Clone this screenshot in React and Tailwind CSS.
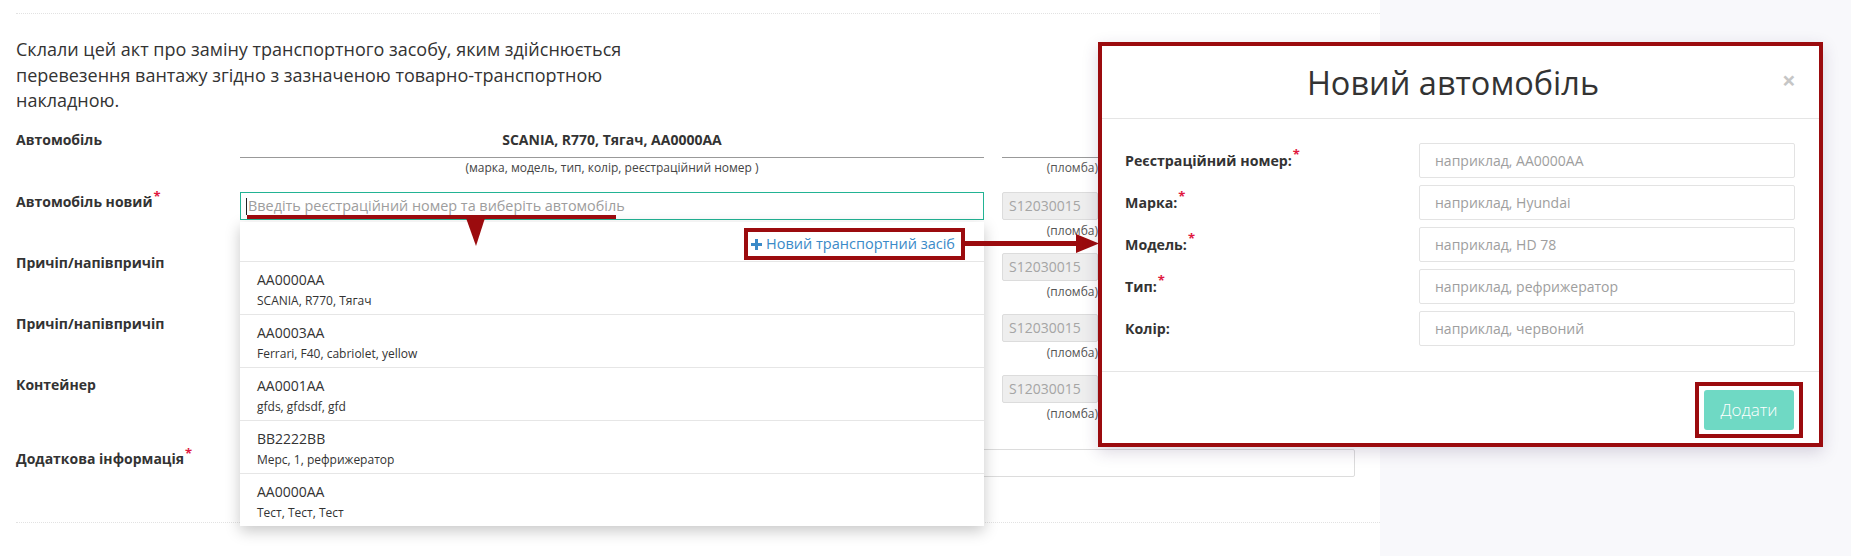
import React from "react";

// items shown in the autocomplete list
const cars = [
  { num: "AA0000AA", desc: "SCANIA, R770, Тягач" },
  { num: "AA0003AA", desc: "Ferrari, F40, cabriolet, yellow" },
  { num: "AA0001AA", desc: "gfds, gfdsdf, gfd" },
  { num: "BB2222BB", desc: "Мерс, 1, рефрижератор" },
  { num: "AA0000AA", desc: "Тест, Тест, Тест" },
];

// fields of the "new car" dialog
const fields = [
  { label: "Реєстраційний номер:", req: true, ph: "наприклад, AA0000AA" },
  { label: "Марка:", req: true, ph: "наприклад, Hyundai" },
  { label: "Модель:", req: true, ph: "наприклад, HD 78" },
  { label: "Тип:", req: true, ph: "наприклад, рефрижератор" },
  { label: "Колір:", req: false, ph: "наприклад, червоний" },
];

const Star = () => <sup className="text-[#e0193f] text-[13px] ml-[1px]">*</sup>;

const Seal = ({ value }) => (
  <div className="w-[96px] shrink-0 ml-[18px]">
    <div className="h-[28px] border border-[#dcdcdc] bg-[#eeeeee] rounded-[2px] pl-[6px] text-[14px] leading-[26px] text-[#a5a5a5] whitespace-nowrap overflow-hidden">
      {value}
    </div>
    <div className="mt-[3px] text-right text-[12px] leading-[16px] text-[#555]">(пломба)</div>
  </div>
);

const Row = ({ label, req, children }) => (
  <div className="flex h-[61px]">
    <div className="w-[224px] shrink-0 text-[14px] font-bold leading-[20px] text-[#333]">
      {label}
      {req && <Star />}
    </div>
    <div className="w-[744px] shrink-0">{children}</div>
    <Seal value="S12030015" />
  </div>
);

const App = () => {
  return (
    <div className="relative flex w-[1851px] h-[556px] overflow-hidden bg-white font-['Open_Sans',sans-serif] text-[#333]">
      {/* main form column */}
      <div className="w-[1380px] shrink-0 bg-white pl-[16px] flex flex-col">
        <div className="mt-[13px] border-t border-dotted border-[#e2e2e2]" />
        <p className="mt-[23px] text-[18px] leading-[25.7px] whitespace-nowrap">
          Склали цей акт про заміну транспортного засобу, яким здійснюється
          <br />
          перевезення вантажу згідно з зазначеною товарно-транспортною
          <br />
          накладною.
        </p>

        {/* current car */}
        <div className="mt-[16px] flex">
          <div className="w-[224px] shrink-0 text-[14px] font-bold leading-[20px]">Автомобіль</div>
          <div className="w-[744px] shrink-0">
            <div className="h-[28px] border-b border-[#999] text-center text-[14px] font-bold leading-[20px]">
              SCANIA, R770, Тягач, AA0000AA
            </div>
            <div className="mt-[2px] text-center text-[12px] leading-[16px] text-[#444]">
              (марка, модель, тип, колір, реєстраційний номер )
            </div>
          </div>
          <div className="w-[96px] shrink-0 ml-[18px]">
            <div className="h-[28px] border-b border-[#999]" />
            <div className="mt-[2px] text-right text-[12px] leading-[16px] text-[#555]">(пломба)</div>
          </div>
        </div>

        <div className="mt-[16px]">
          <Row label="Автомобіль новий" req>
            <div className="relative h-[28px] border border-[#22b394] flex items-center pl-[5px]">
              <span className="w-[1px] h-[17px] bg-[#222] mr-[1px]" />
              <span className="text-[14.4px] text-[#9d9d9d] whitespace-nowrap">
                Введіть реєстраційний номер та виберіть автомобіль
              </span>
            </div>
          </Row>
          <Row label="Причіп/напівпричіп">
            <div className="h-[28px] border border-[#dcdcdc] rounded-[2px]" />
          </Row>
          <Row label="Причіп/напівпричіп">
            <div className="h-[28px] border border-[#dcdcdc] rounded-[2px]" />
          </Row>
          <Row label="Контейнер">
            <div className="h-[28px] border border-[#dcdcdc] rounded-[2px]" />
          </Row>
        </div>

        <div className="mt-[13px] flex">
          <div className="w-[224px] shrink-0 text-[14px] font-bold leading-[20px]">
            Додаткова інформація
            <Star />
          </div>
          <div className="w-[1115px] shrink-0 h-[28px] border border-[#dcdcdc] rounded-[2px]" />
        </div>

        <div className="mt-[45px] border-t border-dotted border-[#e2e2e2]" />
      </div>

      {/* right grey panel */}
      <div className="flex-1 bg-[#f8f8fb]" />

      {/* autocomplete dropdown */}
      <div className="absolute left-[240px] top-[222px] w-[744px] bg-white shadow-[0_5px_14px_rgba(0,0,0,0.22)] z-10">
        <div className="h-[40px] border-b border-[#e6e6e6] flex justify-end pr-[19px]">
          <div className="mt-[6px] h-[32px] border-4 border-[#9b0b0e] flex items-center pl-[3px] pr-[6px] text-[14.5px] text-[#3a8ac8] whitespace-nowrap">
            <svg width="11" height="11" viewBox="0 0 11 11" className="mr-[4px]">
              <rect x="4" y="0" width="3" height="11" fill="#3a8ac8" />
              <rect x="0" y="4" width="11" height="3" fill="#3a8ac8" />
            </svg>
            Новий транспортний засіб
          </div>
        </div>
        {cars.map((car, i) => (
          <div
            key={i}
            className={
              "pl-[17px] pt-[8px] pb-[5px] " + (i < cars.length - 1 ? "border-b border-[#e6e6e6]" : "")
            }
          >
            <div className="text-[14px] leading-[20px]">{car.num}</div>
            <div className="mt-[3px] text-[12px] leading-[16px]">{car.desc}</div>
          </div>
        ))}
      </div>

      {/* red annotation: underline + pointer */}
      <svg className="absolute left-[245px] top-[212px] z-20" width="375" height="36" viewBox="0 0 375 36">
        <rect x="2" y="3" width="369" height="4" fill="#9b0b0e" />
        <path d="M221 6 L240 6 L231 34 Z" fill="#9b0b0e" />
      </svg>

      {/* red annotation: arrow to dialog */}
      <svg className="absolute left-[965px] top-[232px] z-20" width="136" height="22" viewBox="0 0 136 22">
        <rect x="0" y="9" width="114" height="5" fill="#9b0b0e" />
        <path d="M111 2 L134 11.5 L111 21 Z" fill="#9b0b0e" />
      </svg>

      {/* new car dialog */}
      <div className="absolute left-[1098px] top-[42px] w-[725px] h-[405px] border-4 border-[#9b0b0e] bg-white shadow-[0_5px_15px_rgba(60,40,90,0.18)] z-30">
        <div className="relative border-b border-[#e5e5e5] pt-[19px] pb-[17px] pr-[15px] text-center">
          <h2 className="text-[32.5px] leading-[36px] font-medium text-[#333]">Новий автомобіль</h2>
          <span className="absolute left-[680px] top-[16px] text-[24px] font-bold leading-[36px] text-[#c6c6c6]">
            ×
          </span>
        </div>
        <div className="pt-[24px] pb-[25px] pl-[23px] pr-[24px] flex flex-col gap-[7px]">
          {fields.map((f) => (
            <div key={f.label} className="flex items-center h-[35px]">
              <label className="w-[294px] shrink-0 text-[14.2px] font-bold leading-[20px] text-[#333]">
                {f.label}
                {f.req && <Star />}
              </label>
              <input
                type="text"
                placeholder={f.ph}
                className="w-[376px] h-[35px] border border-[#e3e3e3] rounded-[2px] pl-[15px] text-[14px] outline-none placeholder:text-[#9e9e9e]"
              />
            </div>
          ))}
        </div>
        <div className="border-t border-[#e5e5e5] flex justify-end pt-[10px] pr-[16px]">
          <div className="border-4 border-[#9b0b0e] px-[5px] py-[4px]">
            <button className="w-[90px] h-[40px] rounded-[3px] bg-[#6fd9c4] text-white text-[17px] font-light">
              Додати
            </button>
          </div>
        </div>
      </div>
    </div>
  );
};

export default App;
